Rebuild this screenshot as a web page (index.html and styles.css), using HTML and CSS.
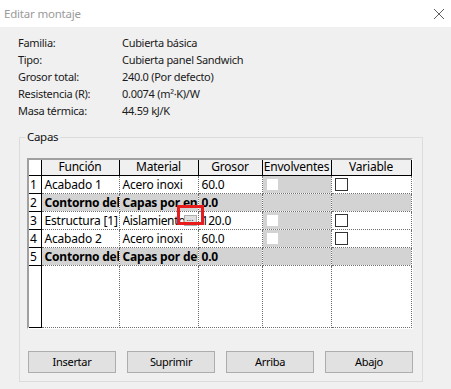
FILE: index.html
```html
<!DOCTYPE html>
<html lang="es">
<head>
    <meta charset="UTF-8">
    <title>Editar montaje</title>
    <link rel="stylesheet" href="styles.css">
</head>
<body>
<!--barra de título-->
<div class="titleBar">
    <span class="titleText">Editar montaje</span>
    <svg class="closeIcon" width="12" height="12" viewBox="0 0 12 12">
        <path d="M1 1 L11 11 M11 1 L1 11" stroke="#5f5f5f" stroke-width="1" fill="none"/>
    </svg>
</div>

<!--datos del montaje-->
<div class="info">
    <span>Familia:</span><span>Cubierta básica</span>
    <span>Tipo:</span><span>Cubierta panel Sandwich</span>
    <span>Grosor total:</span><span>240.0 (Por defecto)</span>
    <span>Resistencia (R):</span><span>0.0074 (m²·K)/W</span>
    <span>Masa térmica:</span><span>44.59 kJ/K</span>
</div>

<!--capas-->
<fieldset class="group">
    <legend>Capas</legend>
    <div class="gridBox">
        <table class="layers">
            <colgroup>
                <col class="cNum"><col class="cFunc"><col class="cMat"><col class="cGros"><col class="cEnv"><col class="cVar">
            </colgroup>
            <tr class="head">
                <th class="num"></th><th>Función</th><th>Material</th><th>Grosor</th><th>Envolventes</th><th>Variable</th>
            </tr>
            <tr>
                <td class="num">1</td><td>Acabado 1</td><td>Acero inoxi</td><td>60.0</td>
                <td class="env"><span class="boxOff"></span></td><td><span class="box"></span></td>
            </tr>
            <tr class="core">
                <td class="num">2</td><td>Contorno del núcleo</td><td>Capas por encima</td><td>0.0</td>
                <td class="env"></td><td></td>
            </tr>
            <tr>
                <td class="num">3</td><td>Estructura [1]</td>
                <td class="matCell"><span class="matText">Aislamiento</span><span class="dots">...</span><span class="mark"></span></td>
                <td>120.0</td>
                <td class="env"><span class="boxOff"></span></td><td><span class="box"></span></td>
            </tr>
            <tr>
                <td class="num">4</td><td>Acabado 2</td><td>Acero inoxi</td><td>60.0</td>
                <td class="env"><span class="boxOff"></span></td><td><span class="box"></span></td>
            </tr>
            <tr class="core">
                <td class="num">5</td><td>Contorno del núcleo</td><td>Capas por debajo</td><td>0.0</td>
                <td class="env"></td><td></td>
            </tr>
            <tr class="filler">
                <td class="num"></td><td></td><td></td><td></td><td></td><td></td>
            </tr>
        </table>
    </div>

    <div class="buttons">
        <div class="btn">Insertar</div>
        <div class="btn">Suprimir</div>
        <div class="btn">Arriba</div>
        <div class="btn">Abajo</div>
    </div>
</fieldset>
</body>
</html>
```

FILE: styles.css
```css
* {
    margin: 0;
    padding: 0;
    box-sizing: border-box;
}

body {
    width: 451px;
    height: 389px;
    background-color: #f0f0f0;
    font-family: "Noto Sans", "Open Sans", sans-serif;
    font-size: 11px;
    letter-spacing: -0.3px;
    color: #1a1a1a;
    overflow: hidden;
}

.titleBar {
    height: 27px;
    background-color: #fff;
    display: flex;
    align-items: center;
    justify-content: space-between;
    padding: 0 6px 0 4px;
}

.titleText {
    font-size: 11.5px;
    letter-spacing: -0.2px;
    color: #9a9a9a;
}

.info {
    display: grid;
    grid-template-columns: 104px auto;
    grid-auto-rows: 17px;
    align-items: center;
    padding: 7px 0 0 18px;
}

.group {
    margin: 11px 28px 0 19px;
    border: 1px solid #dcdcdc;
    padding: 0 9px 8px 7px;
}

.group > legend {
    margin-left: -2px;
    padding: 0 2px;
    font-size: 11.5px;
    line-height: 14px;
    color: #111;
}

.gridBox {
    margin-top: 14px;
    width: 386px;
    height: 171px;
    background-color: #fff;
    border-top: 2px solid #a0a0a0;
    border-left: 2px solid #a0a0a0;
    border-right: 2px solid #fff;
    border-bottom: 2px solid #fff;
}

.layers {
    width: 382px;
    border-collapse: collapse;
    table-layout: fixed;
    font-size: 12px;
    letter-spacing: -0.2px;
    color: #000;
}

.cNum { width: 12px; }
.cFunc { width: 78px; }
.cMat { width: 79px; }
.cGros { width: 64px; }
.cEnv { width: 69px; }
.cVar { width: 80px; }

.layers th {
    height: 15px;
    font-weight: normal;
    background-color: #f0f0f0;
    border-right: 1px solid #000;
    border-bottom: 1px solid #000;
    text-align: center;
    line-height: 14px;
    white-space: nowrap;
    overflow: hidden;
}

.layers td {
    height: 18px;
    padding: 0 0 0 3px;
    line-height: 17px;
    border-right: 1px dotted #6e6e6e;
    border-bottom: 1px dotted #6e6e6e;
    white-space: nowrap;
    overflow: hidden;
}

.layers td.num,
.layers th.num {
    padding: 0 0 0 1px;
    background-color: #fff;
    border-right: 1px solid #000;
    border-bottom: 1px solid #000;
}

.layers tr.core td {
    background-color: #d3d3d3;
    font-weight: bold;
}

.layers tr.core td.num {
    background-color: #fff;
    font-weight: normal;
}

.layers td.env {
    background-color: #d3d3d3;
    padding-left: 4px;
}

.layers tr.filler td {
    height: 62px;
}

.boxOff {
    display: block;
    width: 11px;
    height: 11px;
    background-color: #fff;
}

.box {
    display: block;
    width: 13px;
    height: 13px;
    border: 1px solid #333;
    background-color: #fff;
}

.matCell {
    position: relative;
    overflow: visible !important;
}

.matText {
    display: block;
    width: 63px;
    overflow: hidden;
    letter-spacing: -0.35px;
}

.dots {
    position: absolute;
    right: 1px;
    top: 3px;
    width: 13px;
    height: 11px;
    background-color: #e1e1e1;
    border: 1px solid #adadad;
    font-size: 9px;
    line-height: 4px;
    letter-spacing: 0;
    text-align: center;
    color: #333;
}

.mark {
    position: absolute;
    right: -6px;
    top: -7px;
    width: 27px;
    height: 20px;
    border: 3px solid #e81c1c;
}

.buttons {
    display: flex;
    gap: 11px;
    margin-top: 22px;
    padding-left: 1px;
}

.btn {
    width: 88px;
    height: 22px;
    background-color: #e1e1e1;
    border: 1px solid #adadad;
    line-height: 20px;
    text-align: center;
    color: #000;
}
```
